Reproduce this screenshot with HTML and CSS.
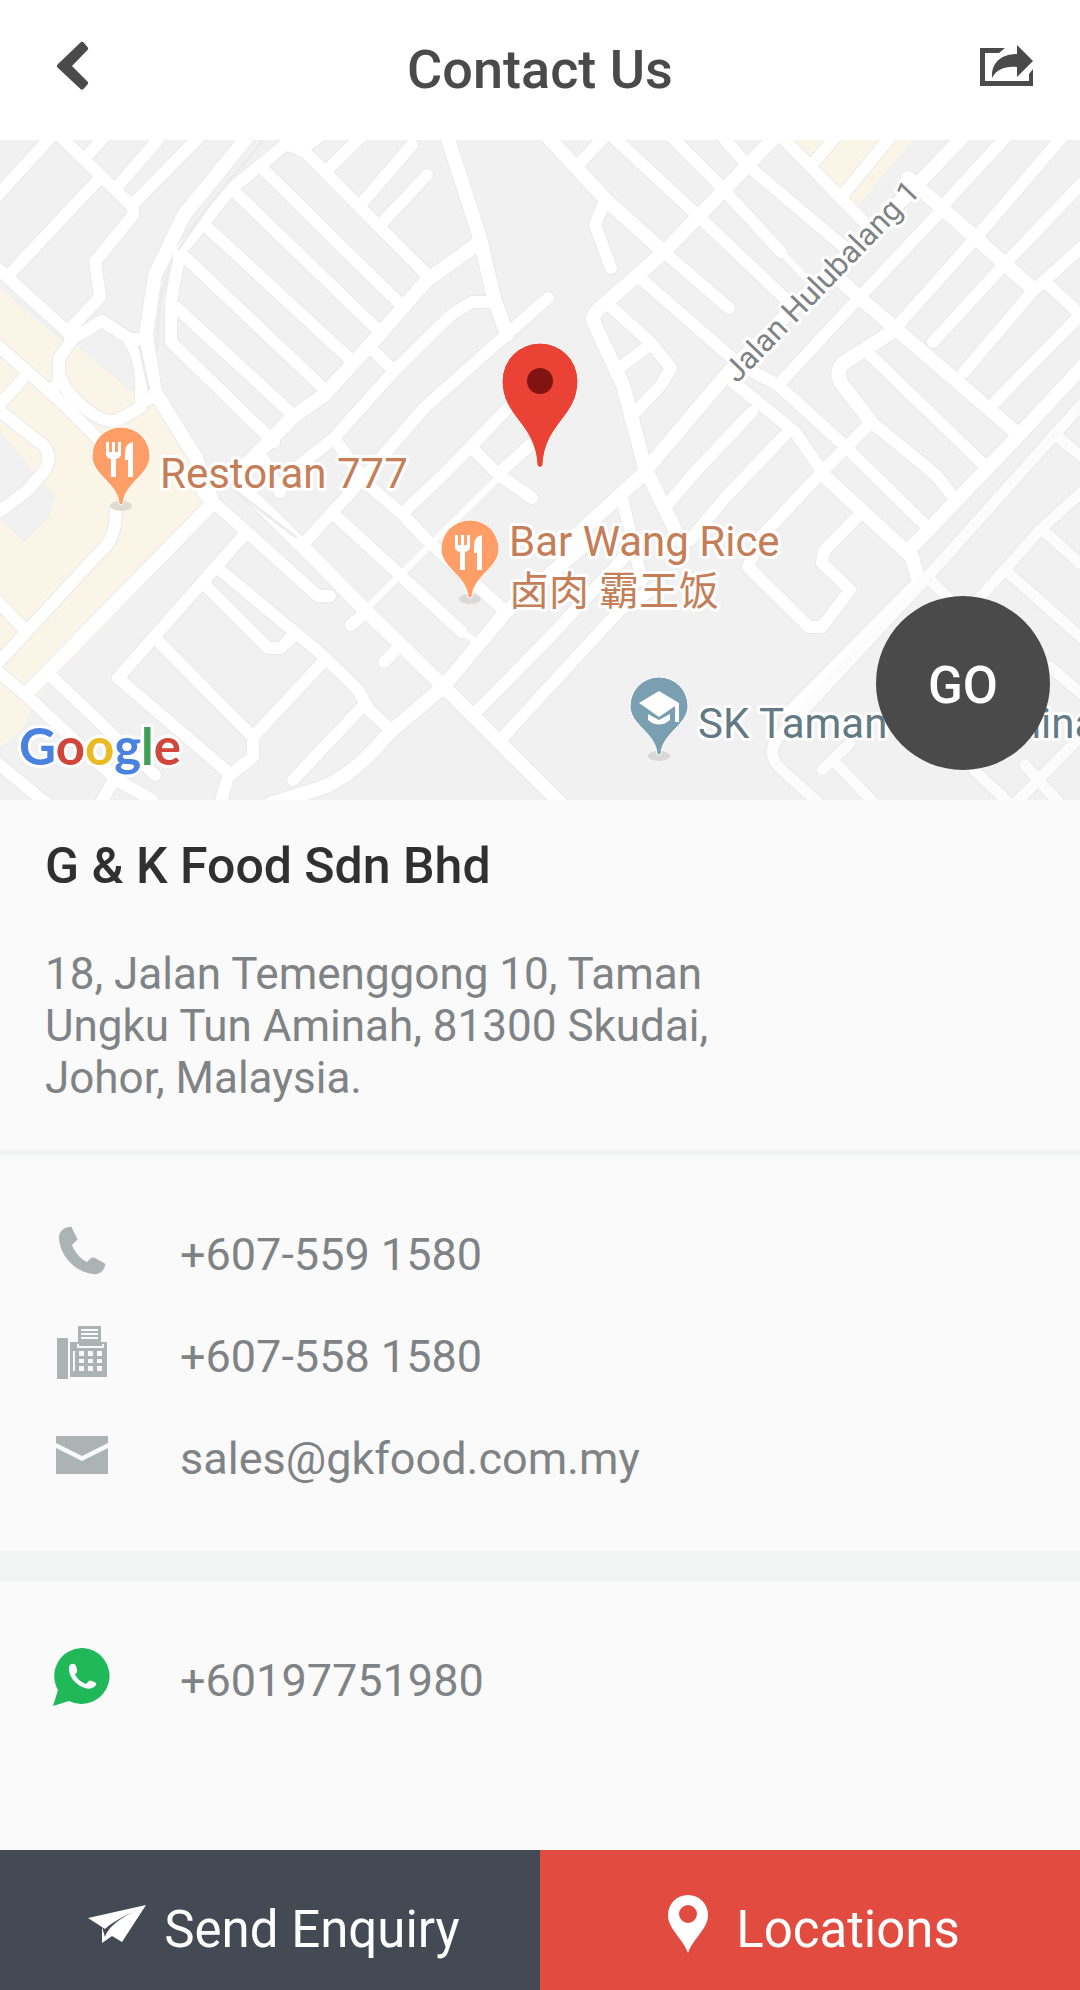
FILE: index.html
```html
<!DOCTYPE html>
<html lang="en">
<head>
<meta charset="UTF-8">
<meta name="viewport" content="width=device-width, initial-scale=1.0">
<title>Contact Us</title>
<link rel="stylesheet" href="styles.css">
</head>
<body>
<div class="page">
<header class="topbar">
<button class="icon-btn" type="button" aria-label="Back">
<svg width="34" height="50" viewBox="0 0 34 50"><path d="M24.500 1.500Q26 0 27.500 1.500L31.500 6Q33 7.500 31.500 9L16 25L31.500 40.500Q33 42 31.500 43.500L27.500 48Q26 49.500 24.500 48L1.500 26.500Q0 25 1.500 23.500Z" fill="#4a4a4a"/></svg>
</button>
<h1 class="topbar-title">Contact Us</h1>
<button class="icon-btn" type="button" aria-label="Share">
<svg width="54" height="42" viewBox="0 0 54 42"><g fill="#4a4a4a"><path d="M0 3H25L19 8H5V36H49V29L53 24V41H0Z"/><path d="M37 0L53 16L37 32V22C25 21 17 24 12 33C11 18 21 9 37 9Z"/></g></svg>
</button>
</header>

<section class="map">
<svg class="map-canvas" viewBox="0 0 1080 660" role="img" aria-label="Map">
<defs>
<g id="roads">
<!-- north west -->
<path d="M-5 58L50 -2M60 -4L133 67V75L95 122L100 157L67 192M98 40L7 137M-4 127L71 195M105 -4L88 15M160 -3L117 47M199 -3L133 64"/>
<path d="M70 200L102 181L130 199H146M72 200L59 218V238L70 254Q100 286 118 280L141 267V255Q143 220 129 200M141 262L155 257"/>
<path d="M-4 204L57 258L97 298M22 240L-4 268L43 305Q53 316 45 330L28 350L-4 374M50 252L62 240M116 370Q116 400 100 412L-4 525M-4 460L24 489"/>
<!-- grid of terraces -->
<path d="M310 -4L285 5L230 50L180 112L171 162V202L274 302M285 4L303 10L430 138M262 28L403 167M238 55L381 193M208 88L353 222M186 118L325 250M177 168L293 275"/>
<path d="M362 -4L327 30M300 10L320 -4M412 5L362 63M427 35L382 83"/>
<path d="M548 158L506 195L424 268L360 342L307 400M492 162H472L451 175L393 232L334 298L290 333M375 212L393 230M334 298L368 345L401 373L430 403L506 472"/>
<path d="M514 262L448 330L404 372M530 305L499 333M472 308L499 335L532 358M337 377L462 492M264 320L280 352"/>
<!-- south west -->
<path d="M203 353L248 393L318 456H330M-4 530L27 556L117 640L152 660M52 537L155 635M244 395L118 538L229 633L220 665M220 430L320 513L358 550L369 570L392 591M205 445L268 508H281L292 497M160 503L253 597M322 523L253 597V617L230 635M362 567L293 640"/>
<path d="M365 473L351 485M398 508L384 522M-4 622L47 664M114 640L100 664M475 573L550 497L617 425L640 400M503 597L620 470L660 445"/>
<!-- north east -->
<path d="M605 -4L581 22M612 -4L695 73L795 168M671 -4L722 48L781 112M722 -4L747 25L850 112M781 -4L865 83M836 -4L812 25M891 -4L843 55M605 60L595 85L611 128M664 112L729 168"/>
<path d="M609 165L650 202L671 228L661 245L630 278M650 205L619 228M640 138L740 225L778 245L847 308M733 242L795 292L826 337"/>
<path d="M940 72L855 162L781 242M1007 -4L946 62M1063 -4L974 100L898 185M1084 41L1001 128L933 202M1084 105L1032 152L964 232M1084 171L995 262M1050 146L1086 180"/>
<path d="M871 282L936 335L950 353M867 212L984 325M847 308L926 386M871 282L822 332L760 398L748 427L809 487H822L850 450L822 423L824 411L857 377M785 295L725 358L690 400M752 272L695 332L667 365M623 362L642 440"/>
</g>
<g id="main-roads">
<path d="M248 -4L184 75L155 135L146 195L155 252L196 318L213 363L27 553M479 103L427 140L379 195L324 255L293 277L238 333"/>
<path d="M447 -4L480 98L494 158L507 195M238 343L303 407L365 470L444 547L560 663M590 400L506 472L442 548L389 593Q350 640 315 650L270 664"/>
<path d="M547 -4L608 62L664 112M776 -4L664 112L600 168Q590 176 595 185L623 245L645 328L680 400M964 -4L910 52L726 235L640 337L560 410"/>
<path d="M908 38L1032 148M840 140L860 158L895 188L1019 295M895 190L842 224Q834 236 845 248L871 282M822 334L912 417L919 443L791 572M1084 225L1019 295L912 407"/>
</g>
<g id="minor-roads">
<path d="M1084 262L1050 300L922 443L776 600Q766 616 782 630L820 664M1054 294L1086 320M1084 350L1040 390L960 480M1043 390L1084 427M1005 430L1084 500M930 440L960 470M833 620L875 664M822 630L850 603M974 630L1010 664M1084 593L1015 664M1025 625L1060 664M1050 527L1084 556"/>
</g>
<g id="lanes"><path d="M499 337L365 470M462 492L476 502M781 112L806 138"/></g>
<g id="fork-knife">
<path d="M-15 -15V-3Q-15 1 -10 2V20H-5V2Q0 1 0 -3V-15H-3V-5H-6V-15H-9V-5H-12V-15Z"/>
<path d="M12 -15Q4 -14 4 -3V3H7V20H12Z"/>
</g>
<path id="pin" d="M-2 47C-3 26 -29 18 -29 -1A29 29 0 0 1 29 -1C29 18 3 26 2 47Q0 49 -2 47Z"/>
</defs>

<rect width="1080" height="660" fill="#f1f1f1"/>
<path class="built-up" d="M0 148L64 203L75 205L136 255L155 262L180 310L215 340L217 368L36 558L22 590L0 607ZM788 0L858 66L912 0Z"/>
<path d="M83 208L98 188L125 200L136 252ZM0 290L36 335L55 355L50 375L25 402L0 380Z" fill="#f1f1f1"/>

<use href="#roads" class="road edge"/>
<use href="#main-roads" class="road main edge"/>
<use href="#minor-roads" class="road minor edge"/>
<use href="#lanes" class="road lane"/>
<use href="#roads" class="road"/>
<use href="#main-roads" class="road main"/>
<use href="#minor-roads" class="road minor"/>
<path class="median" d="M265 -2L207 68L178 110M172 120L160 160L157 210M234 350L297 398M139 205L149 250"/>

<text class="street" transform="translate(737 244) rotate(-46)">Jalan Hulubalang 1</text>

<g class="halo-pin" transform="translate(121 317)">
<ellipse cy="49" rx="11" ry="5" fill="#dfdbd2"/>
<use href="#pin" fill="#ff9e67"/><use href="#fork-knife" fill="#fff"/>
</g>
<text class="place food" x="160" y="348">Restoran 777</text>

<g class="halo-pin" transform="translate(470 410)">
<ellipse cy="49" rx="11" ry="5" fill="#dbd9d7"/>
<use href="#pin" fill="#ff9e67"/><use href="#fork-knife" fill="#fff"/>
</g>
<text class="place food" x="509" y="416">Bar Wang Rice</text>
<text class="place food cjk" x="509" y="465">卤肉 霸王饭</text>

<g class="halo-pin" transform="translate(659 567)">
<ellipse cy="49" rx="11" ry="5" fill="#d8d8d8"/>
<use href="#pin" fill="#7a9fb0"/>
<path d="M-20 -4L0 -16L20 -4V15H16V-1L0 10ZM-11 7L0 13L11 7V13Q0 22 -11 13Z" fill="#fff"/>
</g>
<text class="place school" x="698" y="598">SK Taman Tun Aminah</text>

<path d="M537 325C535 283 502 277 502 241A38 38 0 0 1 578 241C578 277 545 283 543 325Q540 330 537 325Z" fill="#ea4335" stroke="#fff" stroke-width="1"/>
<circle cx="540" cy="241" r="13" fill="#811411"/>

<text class="google" x="19" y="625"><tspan fill="#4a82e0">G</tspan><tspan fill="#d0463b">o</tspan><tspan fill="#ebb923">o</tspan><tspan fill="#4a82e0">g</tspan><tspan fill="#3f9f57">l</tspan><tspan fill="#d0463b">e</tspan></text>
</svg>
<button class="go-btn" type="button">GO</button>
</section>

<main>
<section class="company">
<h2 class="company-name">G &amp; K Food Sdn Bhd</h2>
<p class="company-address">18, Jalan Temenggong 10, Taman Ungku Tun Aminah, 81300 Skudai, Johor, Malaysia.</p>
</section>

<section class="contacts">
<a class="contact-row" href="tel:+6075591580">
<span class="contact-icon"><svg width="50" height="50" viewBox="0 0 50 50"><path d="M12 1Q14 0 15 2L20 12Q21 14 19 15L15 19C18 27 24 33 30 36L34 32Q36 31 38 32L47 37Q49 38 48 40C46 46 42 49 36 48C17 46 2 28 2 11C2 6 6 2 12 1Z" fill="#abb3b3"/></svg></span>
<span>+607-559 1580</span>
</a>
<a class="contact-row" href="tel:+6075581580">
<span class="contact-icon"><svg width="52" height="54" viewBox="0 0 52 54"><path d="M1 12H12V53H1ZM14 16H22V0H45V16H51V51H14Z" fill="#abb3b3"/><path d="M25 3H42V5H25ZM25 7H42V9H25ZM25 11H42V13H25ZM21 18H23V20H46V18H48V22H21ZM17 25H19V45H17ZM23 25H28V30H23ZM32 25H37V30H32ZM41 25H46V30H41ZM23 33H28V37H23ZM32 33H37V37H32ZM41 33H46V37H41ZM23 40H28V45H23ZM32 40H37V45H32ZM41 40H46V45H41Z" fill="#fafafa"/></svg></span>
<span>+607-558 1580</span>
</a>
<a class="contact-row" href="mailto:sales@gkfood.com.my">
<span class="contact-icon"><svg width="54" height="38" viewBox="0 0 54 38"><path d="M1 0H53V7L27 20L1 7ZM1 12L27 25L53 12V38H1Z" fill="#abb3b3"/></svg></span>
<span>sales@gkfood.com.my</span>
</a>
</section>

<section class="whatsapp">
<a class="contact-row" href="https://wa.me/60197751980">
<span class="contact-icon"><svg width="58" height="58" viewBox="0 0 58 58"><path d="M30 0A28 28 0 1 1 16 53L0 58L5 42A28 28 0 0 1 30 0Z" fill="#20b858"/><path d="M18 16Q22 15 23 18L24 22Q25 24 22 26C24 31 28 34 33 36L36 33Q37 32 39 33L43 35Q44 37 41 39Q37 42 32 40C23 37 16 29 16 21Q16 17 18 16Z" fill="#fff"/></svg></span>
<span>+60197751980</span>
</a>
</section>
</main>

<footer class="actions">
<button class="action enquiry" type="button">
<svg width="58" height="38" viewBox="0 0 58 38"><path d="M0 13L58 0L34 37L24 31L14 38V22ZM14 22L17 32Q21 18 51 4Q25 16 17 24Z" fill="#fff" fill-rule="evenodd"/></svg>
<span>Send Enquiry</span>
</button>
<button class="action locations" type="button">
<svg width="40" height="58" viewBox="0 0 40 58"><path d="M20 0A20 20 0 0 1 40 20C40 34 26 42 20 58C14 42 0 34 0 20A20 20 0 0 1 20 0ZM20 10A9 9 0 1 0 20 28A9 9 0 1 0 20 10Z" fill="#fff" fill-rule="evenodd"/></svg>
<span>Locations</span>
</button>
</footer>
</div>
</body>
</html>
```
FILE: styles.css
```css
html,body{
margin:0px;
padding:0px;
background:#fafafa;
}
*{
font-family:Roboto,"Noto Sans CJK SC",sans-serif;
box-sizing:border-box;
}
h1,h2,p{margin:0px;}
button{
border:none;
padding:0px;
background:none;
cursor:pointer;
}
svg{display:block;}
.page{
display:flex;
flex-direction:column;
min-height:100vh;
}
.topbar{
display:flex;
align-items:center;
justify-content:space-between;
height:140px;
padding:0px 46px 8px;
background:#fff;
}
.topbar-title{
color:#4a4a4a;
font-size:54px;
font-weight:500;
line-height:64px;
padding-top:8px;
}
.icon-btn{
width:54px;
display:flex;
justify-content:center;
}
.map{
position:relative;
overflow:hidden;
}
.map-canvas{
width:100%;
height:auto;
}
.built-up{fill:#fbf5e7;}
.road{
fill:none;
stroke:#fff;
stroke-width:12px;
stroke-linecap:round;
stroke-linejoin:round;
}
.road.main{stroke-width:14px;}
.road.minor{
stroke:#fcfcfc;
stroke-width:11px;
}
.road.lane{stroke-width:6px;}
.road.edge{
stroke:#e9e9e9;
stroke-width:14px;
}
.road.main.edge{stroke-width:16px;}
.road.minor.edge{stroke-width:13px;}
.median{
fill:none;
stroke:#ececec;
stroke-width:3px;
}
.street,.place,.google{
paint-order:stroke;
stroke:#fff;
stroke-width:6px;
stroke-linejoin:round;
}
.street{
fill:#808385;
font-size:31px;
}
.place{font-size:42px;}
.place.cjk{font-size:40px;}
.food{fill:#c47e58;}
.school{fill:#637a85;}
.google{
font-family:Lato,sans-serif;
font-size:51px;
font-weight:700;
}
.google tspan{font-family:inherit;}
.halo-pin use:first-of-type{
stroke:#fff;
stroke-width:1px;
}
.go-btn{
position:absolute;
right:30px;
bottom:30px;
width:174px;
height:174px;
padding-top:4px;
border-radius:50%;
background:#4a4a4a;
color:#fff;
font-size:51px;
font-weight:500;
}
.company{
padding:36px 45px 46px;
border-bottom:5px solid #f2f3f3;
}
.company-name{
color:#303030;
font-size:50px;
font-weight:500;
line-height:60px;
}
.company-address{
max-width:700px;
margin-top:52px;
color:#7f8385;
font-size:44px;
line-height:52px;
}
.contacts{
padding:48px 52px 42px;
border-bottom:30px solid #f2f4f4;
}
.contact-row{
display:flex;
align-items:center;
gap:68px;
height:102px;
color:#7f8385;
font-size:45px;
text-decoration:none;
}
.contact-icon{
display:flex;
justify-content:center;
width:60px;
padding-bottom:6px;
}
.whatsapp{padding:48px 52px;}
.actions{
display:flex;
margin-top:auto;
}
.action{
flex:1;
display:flex;
align-items:center;
justify-content:center;
height:140px;
padding:18px 0px 0px 8px;
color:#fff;
font-size:51px;
}
.enquiry{
gap:18px;
background:#434a54;
}
.locations{
gap:28px;
background:#e24b40;
}
.action svg{margin-bottom:10px;}
```
